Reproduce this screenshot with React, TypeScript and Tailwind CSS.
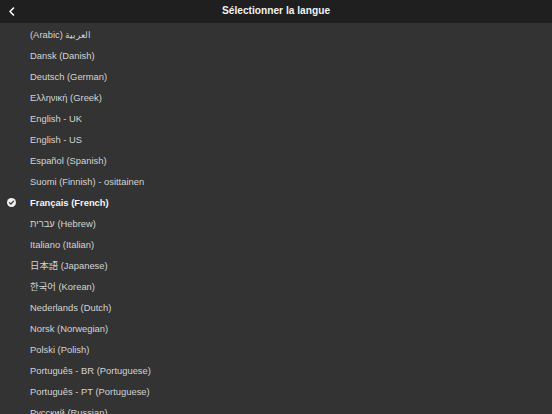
import React from 'react';

const languages = [
  '(Arabic) العربية',
  'Dansk (Danish)',
  'Deutsch (German)',
  'Ελληνική (Greek)',
  'English - UK',
  'English - US',
  'Español (Spanish)',
  'Suomi (Finnish) - osittainen',
  'Français (French)',
  'עברית (Hebrew)',
  'Italiano (Italian)',
  '日本語 (Japanese)',
  '한국어 (Korean)',
  'Nederlands (Dutch)',
  'Norsk (Norwegian)',
  'Polski (Polish)',
  'Português - BR (Portuguese)',
  'Português - PT (Portuguese)',
  'Русский (Russian)',
];

const selected = 'Français (French)';

const App: React.FC = () => {
  return (
    <div
      className="w-[552px] h-[414px] overflow-hidden bg-[#333333] flex flex-col"
      style={{ fontFamily: '"Liberation Sans", "Noto Sans CJK JP", "Noto Sans CJK KR", sans-serif' }}
    >
      <div className="h-[23px] shrink-0 bg-[#1f1f1f] relative flex items-center justify-center">
        <svg className="absolute left-[8px] top-[7px]" width="8" height="9" viewBox="0 0 8 9" fill="none">
          <path d="M5.5 1 L2 4.5 L5.5 8" stroke="#ffffff" strokeWidth="1.6" strokeLinecap="round" strokeLinejoin="round" />
        </svg>
        <h1 className="text-[10.2px] font-semibold text-[#f2f2f2] leading-none">Sélectionner la langue</h1>
      </div>

      <ul className="flex flex-col pt-[1px]">
        {languages.map((lang) => {
          const isSel = lang === selected;
          return (
            <li key={lang} className="h-[21px] shrink-0 flex items-center relative pl-[30px]">
              {isSel && (
                <svg className="absolute left-[7px] top-[6px]" width="9" height="9" viewBox="0 0 9 9">
                  <circle cx="4.5" cy="4.5" r="4.5" fill="#f0f0f0" />
                  <path d="M2.4 4.6 L3.9 6 L6.6 3.1" stroke="#333333" strokeWidth="1.2" fill="none" strokeLinecap="round" strokeLinejoin="round" />
                </svg>
              )}
              <span
                className={
                  isSel
                    ? 'text-[9.4px] font-bold text-[#f5f5f5] leading-none'
                    : 'text-[9.4px] text-[#d4d4d4] leading-none'
                }
              >
                {lang}
              </span>
            </li>
          );
        })}
      </ul>
    </div>
  );
};

export default App;
